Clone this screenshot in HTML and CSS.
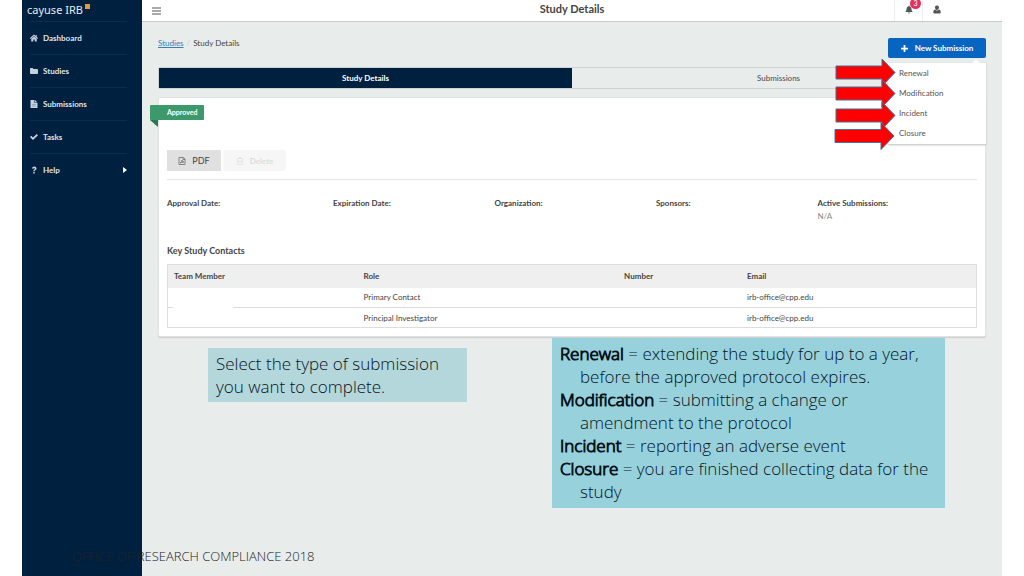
FILE: index.html
```html
<!DOCTYPE html>
<html lang="en">
<head>
<meta charset="utf-8">
<title>Study Details</title>
<link rel="stylesheet" href="styles.css">
</head>
<body>
<div class="slide">
  <aside class="sidebar">
    <a class="brand" href="#">cayuse IRB<span class="brand-mark"></span></a>
    <nav class="nav">
      <a class="nav-item" href="#"><svg class="icon" viewBox="0 0 16 16"><path d="M8 1 0 8l1 2 7-6 7 6 1-2-2.500-2.200V2h-2v2zM8 5 2.500 9.700V15H6.500v-4h3v4h4V9.700z"/></svg>Dashboard</a>
      <a class="nav-item" href="#"><svg class="icon" viewBox="0 0 16 16"><path d="M0 3.500Q0 2 1.500 2H5q1.500 0 1.500 1.500V4H14q2 0 2 1.500v7q0 1.500-1.500 1.500h-13Q0 14 0 12.500z"/></svg>Studies</a>
      <a class="nav-item" href="#"><svg class="icon" viewBox="0 0 16 16"><path d="M1 0h8v6h6v10H1zM10 0l5 5h-5z"/><path class="icon-lines" d="M4 9h8M4 12h8"/></svg>Submissions</a>
      <a class="nav-item" href="#"><svg class="icon" viewBox="0 0 16 16"><path d="m0 8 2.500-2.500L6 9l7.500-7L16 4.500 6 14z"/></svg>Tasks</a>
      <a class="nav-item" href="#"><svg class="icon" viewBox="0 0 16 16"><path d="M4 5q0-4 4.500-4T13 5q0 2-2 3-1.500.8-1.500 2.500h-3Q6.500 8 8.500 7q1-.6 1-1.700T8.300 4Q7 4 7 5.500zM6.500 12h3v3h-3z"/></svg>Help<svg class="caret" viewBox="0 0 4 6"><path d="m0 0 4 3-4 3z"/></svg></a>
    </nav>
  </aside>

  <div class="main">
    <header class="topbar">
      <button class="menu-button" aria-label="Toggle menu"><svg viewBox="0 0 9 8"><path d="M0 1h9M0 4h9M0 7h9"/></svg></button>
      <h1 class="title">Study Details</h1>
      <div class="tools">
        <button class="tool" aria-label="Notifications"><svg viewBox="0 0 16 16"><path d="M8 0q1 0 1 1.500 4 1 4 5.500 0 4 2.500 6H.5Q3 11 3 7q0-4.500 4-5.500Q7 0 8 0zM6 14h4q0 2-2 2t-2-2z"/></svg><span class="badge">3</span></button>
        <button class="tool" aria-label="Account"><svg viewBox="0 0 16 16"><path d="M8 0q4 0 4 4.200T8 9 4 4.200 8 0zM4 8q4 3.500 8 0 3.500.5 3.500 5 0 3-2.500 3H3q-2.500 0-2.500-3Q.5 8.500 4 8z"/></svg></button>
      </div>
    </header>

    <main class="content">
      <div class="head-row">
        <nav class="crumbs"><a href="#">Studies</a><span class="slash">/</span><span>Study Details</span></nav>
        <div class="new-submission">
          <button class="primary"><svg viewBox="0 0 8 8"><path d="M4 0v8M0 4h8"/></svg>New Submission</button>
          <ul class="dropdown">
            <li><a href="#">Renewal</a></li>
            <li><a href="#">Modification</a></li>
            <li><a href="#">Incident</a></li>
            <li><a href="#">Closure</a></li>
          </ul>
          <svg class="arrows" viewBox="0 0 64 94">
            <path d="M2 8h46V1l13 13.500L48 28v-7H2z"/>
            <path d="M2 29h46v-7l13 13.500L48 49v-7H2z"/>
            <path d="M2 51h46v-7l13 13.500L48 71v-7H2z"/>
            <path d="M1 71.500h46v-7L60 78 47 91.500v-7H1z"/>
          </svg>
        </div>
      </div>

      <div class="tabs">
        <button class="tab active">Study Details</button>
        <button class="tab">Submissions</button>
      </div>

      <section class="card">
        <span class="ribbon">Approved</span>
        <div class="actions">
          <button class="action"><svg viewBox="0 0 16 16"><path d="M2 1h9l3 3v11H2zM10 1v4h4M4 12q4-2 4-6 1 5 4 4-5 0-8 2"/></svg>PDF</button>
          <button class="action" disabled><svg viewBox="0 0 16 16"><path d="M2 3h12M6 3V1h4v2M3 4v11h10V4M6 6v6M10 6v6"/></svg>Delete</button>
        </div>
        <dl class="facts">
          <div><dt>Approval Date:</dt></div>
          <div><dt>Expiration Date:</dt></div>
          <div><dt>Organization:</dt></div>
          <div><dt>Sponsors:</dt></div>
          <div><dt>Active Submissions:</dt><dd>N/A</dd></div>
        </dl>
        <h2 class="subtitle">Key Study Contacts</h2>
        <table class="contacts">
          <colgroup><col class="col-member"><col class="col-role"><col class="col-number"><col></colgroup>
          <thead><tr><th>Team Member</th><th>Role</th><th>Number</th><th>Email</th></tr></thead>
          <tbody>
            <tr><td class="redacted"></td><td>Primary Contact</td><td></td><td>irb-office@cpp.edu</td></tr>
            <tr><td></td><td>Principal Investigator</td><td></td><td>irb-office@cpp.edu</td></tr>
          </tbody>
        </table>
      </section>

      <div class="notes">
        <p class="note prompt">Select the type of submission<br>you want to complete.</p>
        <div class="note definitions">
          <p><b>Renewal</b> = extending the study for up to a year,<br>before the approved protocol expires.</p>
          <p><b>Modification</b> = submitting a change or<br>amendment to the protocol</p>
          <p><b>Incident</b> = reporting an adverse event</p>
          <p><b>Closure</b> = you are finished collecting data for the<br>study</p>
        </div>
      </div>
    </main>
  </div>
  <footer class="credit">OFFICE OF RESEARCH COMPLIANCE 2018</footer>
</div>
</body>
</html>
```

FILE: styles.css
```css
* { box-sizing: border-box; }
body { margin: 0; background: #fff; color: #444; font: 8px/12px Lato, sans-serif; }
h1, h2, p, dl, dd, ul { margin: 0; padding: 0; }
button { margin: 0; padding: 0; border: 0; background: none; color: inherit; font: inherit; }
svg { flex: none; fill: currentColor; }

.slide { position: relative; display: grid; grid-template-columns: 120px 1fr; min-height: 100vh; margin: 0 22px; background: #e8edec; }

.sidebar { background: #00203f; color: #dfe6ee; }
.brand { display: flex; height: 21px; padding: 1px 5px; color: #e6ebf0; font: 12px/17px "Noto Sans", sans-serif; font-size: 11px; text-decoration: none; }
.brand-mark { width: 5px; height: 5px; margin: 3px 0 0 2px; background: #e39a3c; }
.nav-item { display: flex; align-items: center; gap: 5px; height: 33px; margin-left: 8px; margin-right: 15px; border-top: 1px solid #0b2c4c; color: inherit; font-weight: 700; text-decoration: none; }
.icon { width: 8px; height: 8px; fill: #c3d0de; }
.icon-lines { stroke: #6d839b; }
.caret { width: 4px; height: 6px; margin-left: auto; fill: #fff; }

.main { min-width: 0; }
.topbar { display: flex; align-items: center; height: 22px; padding-left: 10px; border-bottom: 1px solid #c5caca; background: #fff; }
.menu-button svg { display: block; width: 9px; height: 8px; stroke: #555; }
.title { flex: 1; padding-left: 89px; color: #444; font-size: 11px; line-height: 16px; padding-bottom: 3px; font-weight: 700; text-align: center; }
.tools { display: flex; align-self: stretch; margin-right: 52px; }
.tool { position: relative; display: flex; align-items: center; justify-content: center; width: 28px; padding-bottom: 2px; border-left: 1px solid #eee; color: #555; }
.tool svg { width: 8px; height: 9px; }
.badge { position: absolute; top: -2px; left: 15px; width: 11px; height: 11px; border-radius: 50%; background: #e0325f; color: #fff; font-size: 7px; line-height: 11px; }

.content { padding: 16px 16px 0; }
.head-row { display: flex; justify-content: space-between; }
.crumbs { display: flex; gap: 3px; line-height: 10px; }
.crumbs a { color: #2f80bd; }
.slash { color: #ccc; }
.new-submission { position: relative; z-index: 2; }
.primary { display: flex; align-items: center; justify-content: center; gap: 7px; width: 98px; height: 20px; border-radius: 2px; background: #0565c1; color: #fff; font-weight: 700; }
.primary svg { width: 7px; height: 7px; stroke: #fff; stroke-width: 2; }
.dropdown { position: absolute; top: 25px; right: 0; width: 98px; padding-bottom: 1px; background: #fff; box-shadow: 0 1px 2px #bbb; list-style: none; }
.dropdown::before { content: ""; position: absolute; top: -4px; right: 6px; border: 4px solid transparent; border-top: 0; border-bottom-color: #fff; }
.dropdown a { display: block; padding-left: 11px; color: #555; line-height: 20px; text-decoration: none; }
.arrows { position: absolute; top: 20px; right: 88px; width: 64px; height: 94px; fill: #f00; stroke: #41719c; }

.tabs { display: flex; height: 22px; margin-top: 9px; border: 1px solid #cdd2d2; border-radius: 2px; }
.tab { flex: 1; color: #555; font-weight: 500; }
.tab.active { background: #00203f; color: #fff; font-weight: 700; }

.card { margin-top: 8px; padding: 7px 8px 8px; border: 1px solid #dfe3e3; border-radius: 2px; background: #fff; box-shadow: 0 1px 1px #ccc; }
.ribbon { position: relative; display: block; width: 54px; height: 15px; margin-left: -17px; padding-left: 17px; border-radius: 1px; background: #3b996c; color: #fff; font-size: 7px; line-height: 15px; font-weight: 700; }
.ribbon::after { content: ""; position: absolute; top: 15px; left: 0; border-top: 7px solid #257a50; border-left: 8px solid transparent; }
.actions { display: flex; gap: 2px; margin-top: 30px; padding-bottom: 8px; border-bottom: 1px solid #e6e6e6; }
.action { display: flex; align-items: center; justify-content: center; gap: 6px; width: 54px; height: 21px; background: #e0e0e0; color: #444; font-size: 9px; }
.action:disabled { width: 63px; border-radius: 3px; background: #f6f6f6; color: #ddd; font-size: 8px; font-weight: 700; }
.action svg { width: 8px; height: 8px; fill: none; stroke: currentColor; stroke-width: 2; opacity: .6; }
.facts { display: grid; grid-template-columns: 166px repeat(4, 1fr); margin-top: 17px; height: 47px; margin-right: -2px; }
.facts dt { font-weight: 700; }
.facts dd { color: #888; line-height: 14px; }
.subtitle { margin-bottom: 7px; color: #444; font-size: 9px; line-height: 13px; font-weight: 700; }
.contacts { width: 100%; border: 1px solid #ddd; border-collapse: collapse; table-layout: fixed; }
.col-member { width: 23.5%; }
.col-role { width: 32.2%; }
.col-number { width: 15.2%; }
.contacts th { height: 23px; padding: 0 6px; background: #efefef; text-align: left; font-weight: 700; }
.contacts td { height: 20px; padding: 0 6px; }
.contacts tbody tr + tr { border-top: 1px solid #ddd; }
.redacted { position: relative; }
.redacted::after { content: ""; position: absolute; left: 5px; bottom: -2px; width: 60px; height: 4px; background: #fff; }

.notes { display: flex; align-items: flex-start; justify-content: space-between; margin: 1px 41px 0 50px; color: #06131c; font: 300 17px/23px "Open Sans", sans-serif; }
.note { padding: 4px 8px; background: #97d2dc; }
.prompt { width: 259px; margin-top: 10px; background: #b4d7dc; }
.definitions { width: 393px; padding-bottom: 5px; white-space: nowrap; }
.definitions p { padding-left: 20px; text-indent: -20px; }
.definitions b { font-weight: 300; -webkit-text-stroke: 1px #06131c; }

.credit { position: absolute; left: 50px; bottom: 11px; color: #222; font: 300 13px/18px "Open Sans", sans-serif; }
```
